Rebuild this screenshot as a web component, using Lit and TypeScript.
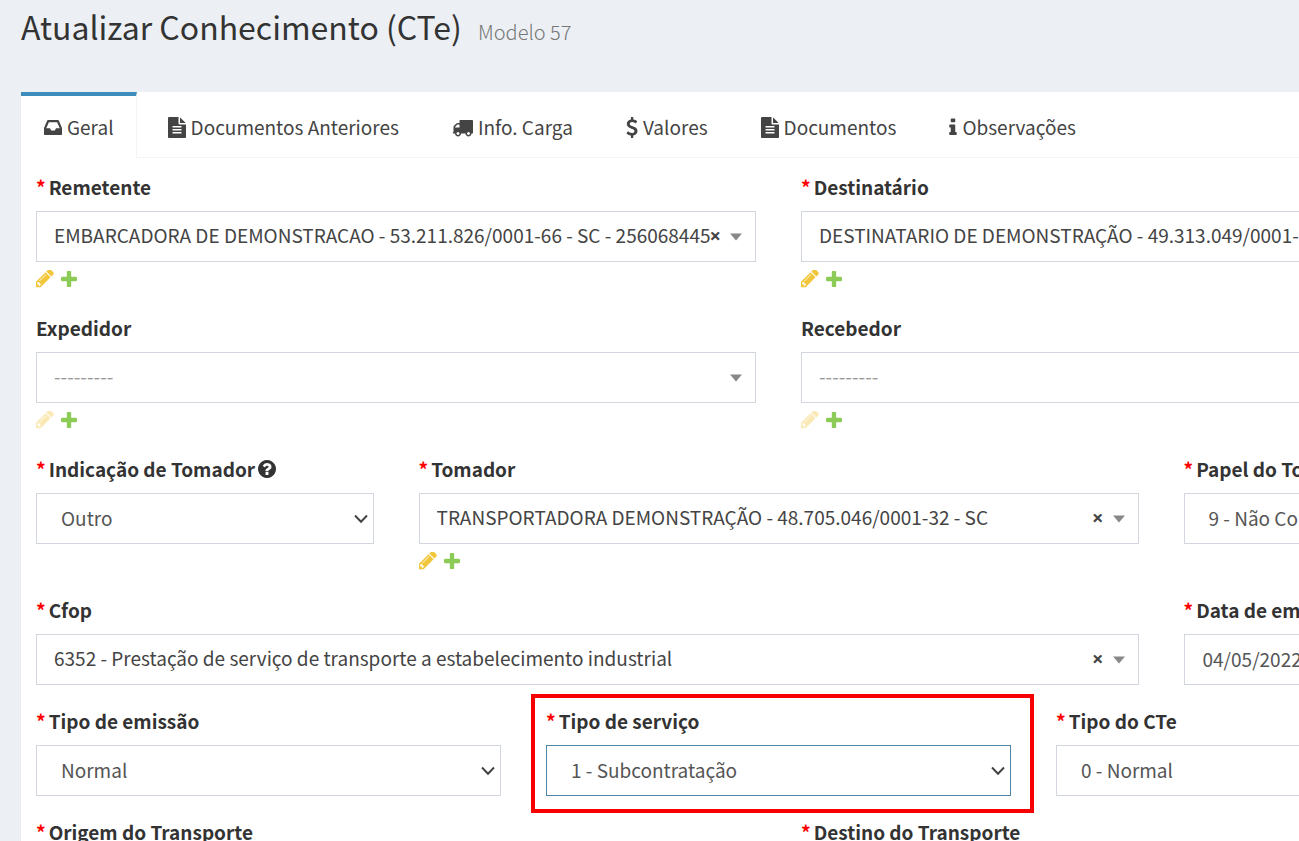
import { LitElement, html, css, svg, nothing } from "lit";
import { customElement, property } from "lit/decorators.js";

type Glyph = { box: string; width: number; height: number; path: string };

const GLYPHS: Record<string, Glyph> = {
  inbox: {
    box: "128 0 1536 1792", width: 18, height: 21,
    path: "M1151 960h316q-1-3-2.5-8t-2.5-8l-212-496h-708l-212 496q-1 2-2.5 8t-2.5 8h316l95 192h320zm513 30v482q0 26-19 45t-45 19h-1408q-26 0-45-19t-19-45v-482q0-62 25-123l238-552q10-25 36.5-42t52.5-17h832q26 0 52.5 17t36.5 42l238 552q25 61 25 123z",
  },
  file: {
    box: "128 0 1536 1792", width: 18, height: 21,
    path: "M1596 476q14 14 28 36h-472v-472q22 14 36 28zm-476 164h544v1056q0 40-28 68t-68 28h-1344q-40 0-68-28t-28-68v-1600q0-40 28-68t68-28h800v544q0 40 28 68t68 28zm160 736v-64q0-14-9-23t-23-9h-704q-14 0-23 9t-9 23v64q0 14 9 23t23 9h704q14 0 23-9t9-23zm0-256v-64q0-14-9-23t-23-9h-704q-14 0-23 9t-9 23v64q0 14 9 23t23 9h704q14 0 23-9t9-23zm0-256v-64q0-14-9-23t-23-9h-704q-14 0-23 9t-9 23v64q0 14 9 23t23 9h704q14 0 23-9t9-23z",
  },
  truck: {
    box: "0 0 1792 1792", width: 21, height: 21,
    path: "M640 1408q0-52-38-90t-90-38-90 38-38 90 38 90 90 38 90-38 38-90zm-384-512h384v-256h-158q-13 0-22 9l-195 195q-9 9-9 22v30zm1280 512q0-52-38-90t-90-38-90 38-38 90 38 90 90 38 90-38 38-90zm256-1088v1024q0 15-4 26.5t-13.5 18.5-16.5 11.5-23.5 6-22.5 2-25.5 0-22.5-.5q0 106-75 181t-181 75-181-75-75-181h-384q0 106-75 181t-181 75-181-75-75-181h-64q-3 0-22.5.5t-25.5 0-22.5-2-23.5-6-16.5-11.5-13.5-18.5-4-26.5q0-26 19-45t45-19v-320q0-8-.5-35t0-38 2.5-34.5 6.5-37 14-30.5 22.5-30l198-198q19-19 50.5-32t58.5-13h160v-192q0-26 19-45t45-19h1024q26 0 45 19t19 45z",
  },
  dollar: {
    box: "384 0 1024 1792", width: 12, height: 21,
    path: "M1362 1185q0 153-99.5 263.5t-258.5 136.5v175q0 14-9 23t-23 9h-135q-13 0-22.5-9.5t-9.5-22.5v-175q-66-9-127.5-31t-101.5-44.5-74-48-46.5-37.5-17.5-18q-17-21-2-41l103-135q7-10 23-12 15-2 24 9l2 2q113 99 243 125 37 8 74 8 81 0 142.5-43t61.5-122q0-28-15-53t-33.5-42-58.5-37.5-66-32-80-32.5q-39-16-61.5-25t-61.5-26.5-62.5-31-56.5-35.5-53.5-42.5-43.5-49-35.5-58-21-66.5-8.5-78q0-138 98-242t255-134v-180q0-13 9.5-22.5t22.5-9.5h135q14 0 23 9t9 23v176q57 6 110.5 23t87 33.5 63.5 37.5 39 29 15 14q17 18 5 38l-81 146q-8 15-23 16-14 3-27-7-3-3-14.5-12t-39-26.5-58.5-32-74.5-26-85.5-11.5q-95 0-155 43t-60 111q0 26 8.5 48t29.5 41.5 39.5 33 56 31 60.5 27 70 27.5q53 20 81 31.5t76 35 75.5 42.5 62 50 53 63.5 31.5 76.5 13 94z",
  },
  info: {
    box: "555 0 683 1792", width: 8, height: 21,
    path: "M1216 1344v128q0 26-19 45t-45 19h-512q-26 0-45-19t-19-45v-128q0-26 19-45t45-19h64v-384h-64q-26 0-45-19t-19-45v-128q0-26 19-45t45-19h384q26 0 45 19t19 45v576h64q26 0 45 19t19 45zm-128-1152v192q0 26-19 45t-45 19h-256q-26 0-45-19t-19-45v-192q0-26 19-45t45-19h256q26 0 45 19t19 45z",
  },
  help: {
    box: "128 128 1536 1536", width: 18, height: 18,
    path: "M1024 1376v-192q0-14-9-23t-23-9h-192q-14 0-23 9t-9 23v192q0 14 9 23t23 9h192q14 0 23-9t9-23zm256-672q0-88-55.5-163t-138.5-116-170-41q-243 0-371 213-15 24 8 42l132 100q7 6 19 6 16 0 25-12 53-68 86-92 34-24 86-24 48 0 85.5 26t37.5 59q0 38-20 61t-68 45q-63 28-115.5 86.5t-52.5 125.5v36q0 14 9 23t23 9h192q14 0 23-9t9-23q0-19 21.5-49.5t54.5-49.5q32-18 49-28.5t46-35 44.5-48 28-60.5 12.5-81zm384 192q0 209-103 385.5t-279.5 279.5-385.5 103-385.5-103-279.5-279.5-103-385.5 103-385.5 279.5-279.5 385.5-103 385.5 103 279.5 279.5 103 385.5z",
  },
  pencil: {
    box: "160 230 1500 1500", width: 18, height: 18,
    path: "M491 1536l91-91-235-235-91 91v107h128v128h107zm523-928q0-22-22-22-10 0-17 7l-542 542q-7 7-7 17 0 22 22 22 10 0 17-7l542-542q7-7 7-17zm-54-192l416 416-832 832h-416v-416zm683 96q0 53-37 90l-166 166-416-416 166-165q36-38 90-38 53 0 91 38l235 234q37 39 37 91z",
  },
  plus: {
    box: "192 188 1408 1408", width: 16, height: 16,
    path: "M1600 796v192q0 40-28 68t-68 28h-416v416q0 40-28 68t-68 28h-192q-40 0-68-28t-28-68v-416h-416q-40 0-68-28t-28-68v-192q0-40 28-68t68-28h416v-416q0-40 28-68t68-28h192q40 0 68 28t28 68v416h416q40 0 68 28t28 68z",
  },
};

const glyph = (name: string) => {
  const g = GLYPHS[name];
  return html`<svg class="glyph" width=${g.width} height=${g.height} viewBox=${g.box} aria-hidden="true">
    ${svg`<path d=${g.path}></path>`}
  </svg>`;
};

const shared = css`
  * { box-sizing: border-box; }
  .glyph { display: block; flex: none; fill: currentColor; }
`;

@customElement("cte-field")
export class CteField extends LitElement {
  @property() label = "";
  @property() value = "";
  /** "search" (clearable lookup), "select" (plain list) or "text". */
  @property() kind = "select";
  @property({ type: Boolean }) required = false;
  @property({ type: Boolean }) help = false;
  @property({ type: Boolean }) related = false;
  @property({ type: Boolean }) active = false;

  static styles = [
    shared,
    css`
      :host { display: block; min-width: 0; }
      .caption {
        display: flex;
        align-items: center;
        gap: 3px;
        height: 28px;
        margin-bottom: 10px;
        font-weight: 700;
        line-height: 28px;
        color: #333;
        white-space: nowrap;
      }
      .required { color: #f00; }
      .box {
        display: grid;
        align-items: center;
        height: 51px;
        border: 1px solid #d2d6de;
        background: #fff;
      }
      .box.active { border-color: #4d86a6; }
      .control {
        grid-area: 1 / 1;
        width: 100%;
        min-width: 0;
        height: 49px;
        margin: 0;
        border: 0;
        outline: 0;
        border-radius: 0;
        appearance: none;
        background: transparent;
        color: #555;
        font: inherit;
        line-height: 30px;
        padding: 0 36px 2px 24px;
      }
      .search .control { color: #444; padding: 0 44px 4px 17px; }
      .search.empty .control { color: #999; }
      .text .control { padding: 0 18px 2px; }
      .marks {
        grid-area: 1 / 1;
        justify-self: end;
        display: flex;
        align-items: center;
        gap: 9px;
        padding-right: 13px;
        pointer-events: none;
      }
      .select .marks { padding-right: 5px; }
      .arrow { display: block; fill: #888; }
      .chevron { display: block; fill: none; stroke: #444; stroke-width: 2; }
      .clear {
        display: block;
        padding: 0 0 2px;
        border: 0;
        background: none;
        color: #444;
        font-family: "Open Sans", sans-serif;
        font-size: 20px;
        font-weight: 700;
        line-height: 24px;
        pointer-events: auto;
      }
      .links { display: flex; align-items: center; gap: 7px; height: 30px; padding-top: 4px; }
      .link { display: block; opacity: 0.8; }
      .edit { color: #efb80b; }
      .edit.disabled { opacity: 0.3; }
      .add { color: #70bf2b; }
    `,
  ];

  private control() {
    if (this.kind === "text") {
      return html`<input id="control" class="control" type="text" .value=${this.value} />`;
    }
    return html`<select id="control" class="control"><option selected>${this.value || "---------"}</option></select>`;
  }

  private marks() {
    if (this.kind === "text") return nothing;
    if (this.kind === "select") {
      return html`<span class="marks"><svg class="chevron" width="14" height="10" viewBox="0 0 14 10" aria-hidden="true"><path d="M1 1.5 7 7.7 13 1.5"></path></svg></span>`;
    }
    return html`<span class="marks">
      ${this.value ? html`<button class="clear" type="button" aria-label="Limpar">×</button>` : nothing}
      <svg class="arrow" width="12" height="8" viewBox="0 0 12 8" aria-hidden="true"><path d="M0 0.5h12l-6 7z"></path></svg>
    </span>`;
  }

  render() {
    const box = `box ${this.kind}${this.active ? " active" : ""}${this.value ? "" : " empty"}`;
    return html`
      <label class="caption" for="control">
        ${this.required ? html`<span class="required">*</span>` : nothing}
        <span>${this.label}</span>
        ${this.help ? glyph("help") : nothing}
      </label>
      <div class=${box}>${this.control()}${this.marks()}</div>
      ${this.related
        ? html`<div class="links">
            <a class="link edit ${this.value ? "" : "disabled"}" href="#editar" aria-label="Editar">${glyph("pencil")}</a>
            <a class="link add" href="#adicionar" aria-label="Adicionar">${glyph("plus")}</a>
          </div>`
        : nothing}
    `;
  }
}

const TABS = [
  { icon: "inbox", text: "Geral" },
  { icon: "file", text: "Documentos Anteriores" },
  { icon: "truck", text: "Info. Carga" },
  { icon: "dollar", text: "Valores" },
  { icon: "file", text: "Documentos" },
  { icon: "info", text: "Observações" },
];

@customElement("app-root")
export class AppRoot extends LitElement {
  static styles = [
    shared,
    css`
      :host {
        display: flex;
        flex-direction: column;
        height: 100vh;
        overflow: hidden;
        background: #ecf0f5;
        color: #333;
        font-family: "Noto Sans CJK SC", "Noto Sans CJK JP", "Open Sans", sans-serif;
        font-size: 19px;
        line-height: 30px;
      }
      .heading {
        display: flex;
        align-items: baseline;
        gap: 16px;
        margin: 0;
        padding: 6px 21px 40px;
        font-size: 32px;
        line-height: 40px;
        font-weight: 400;
        white-space: nowrap;
      }
      .model { font-size: 20px; font-weight: 300; color: #777; }
      .panel {
        flex: 1 0 auto;
        min-width: 1515px;
        margin-left: 21px;
        background: #fff;
        box-shadow: 0 1px 1px rgba(0, 0, 0, 0.1);
      }
      .tabs { display: flex; gap: 8px; height: 66px; border-bottom: 1px solid #f4f4f4; }
      .tab {
        display: flex;
        align-items: center;
        gap: 5px;
        height: 66px;
        padding: 0 22px 0 23px;
        border-top: 4px solid transparent;
        color: #444;
        text-decoration: none;
        white-space: nowrap;
      }
      .tab.current {
        border-top-color: #3c8dbc;
        border-right: 1px solid #f4f4f4;
        background: #fff;
      }
      .form {
        display: grid;
        grid-template-columns: repeat(12, minmax(0, 1fr));
        gap: 22px 45px;
        padding: 15px;
      }
      .span-3 { grid-column: span 3; }
      .span-4 { grid-column: span 4; }
      .span-6 { grid-column: span 6; }
      .span-9 { grid-column: span 9; }
      .marked { position: relative; }
      .marked::after {
        content: "";
        position: absolute;
        inset: -13px -23px -17px -15px;
        border: 4px solid #f80000;
        pointer-events: none;
      }
    `,
  ];

  render() {
    return html`
      <h1 class="heading">Atualizar Conhecimento (CTe) <small class="model">Modelo 57</small></h1>
      <main class="panel">
        <nav class="tabs">
          ${TABS.map(
            (tab, i) => html`<a class="tab ${i === 0 ? "current" : ""}" href="#aba-${i}">${glyph(tab.icon)}<span>${tab.text}</span></a>`
          )}
        </nav>
        <form class="form">
          <cte-field class="span-6" kind="search" required related label="Remetente"
            value="EMBARCADORA DE DEMONSTRACAO - 53.211.826/0001-66 - SC - 256068445"></cte-field>
          <cte-field class="span-6" kind="search" required related label="Destinatário"
            value="DESTINATARIO DE DEMONSTRAÇÃO - 49.313.049/0001-90 - SC"></cte-field>
          <cte-field class="span-6" kind="search" related label="Expedidor"></cte-field>
          <cte-field class="span-6" kind="search" related label="Recebedor"></cte-field>
          <cte-field class="span-3" required help label="Indicação de Tomador" value="Outro"></cte-field>
          <cte-field class="span-6" kind="search" required related label="Tomador"
            value="TRANSPORTADORA DEMONSTRAÇÃO - 48.705.046/0001-32 - SC"></cte-field>
          <cte-field class="span-3" required label="Papel do Tomador" value="9 - Não Contribuinte"></cte-field>
          <cte-field class="span-9" kind="search" required label="Cfop"
            value="6352 - Prestação de serviço de transporte a estabelecimento industrial"></cte-field>
          <cte-field class="span-3" kind="text" required label="Data de emissão" value="04/05/2022 10:00"></cte-field>
          <cte-field class="span-4" required label="Tipo de emissão" value="Normal"></cte-field>
          <cte-field class="span-4 marked" required active label="Tipo de serviço" value="1 - Subcontratação"></cte-field>
          <cte-field class="span-4" required label="Tipo do CTe" value="0 - Normal"></cte-field>
          <cte-field class="span-6" kind="search" required label="Origem do Transporte"></cte-field>
          <cte-field class="span-6" kind="search" required label="Destino do Transporte"></cte-field>
        </form>
      </main>
    `;
  }
}
